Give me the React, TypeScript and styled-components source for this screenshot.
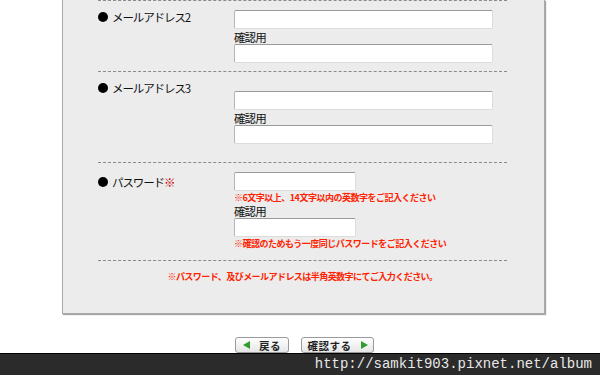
import React from "react";
import styled, { createGlobalStyle } from "styled-components";

const Global = createGlobalStyle`
  html, body { margin: 0; padding: 0; background: #fff; }
  body { font-family: "Noto Sans CJK JP", "Liberation Sans", sans-serif; overflow: hidden; }
`;

const Page = styled.div`
  width: 600px;
  height: 375px;
  display: flex;
  flex-direction: column;
`;

const Main = styled.div`
  width: 483px;
  margin-left: 62px;
  display: flex;
  flex-direction: column;
`;

const Panel = styled.div`
  background: #ececec;
  border: 1px solid #a9a9a9;
  border-top: none;
  box-shadow: 1px 1px 1px rgba(0, 0, 0, 0.35);
  padding: 0 37px 0 35px;
  height: 314px;
  box-sizing: border-box;
  display: flex;
  flex-direction: column;
`;

const Section = styled.div<{ $pt: number; $pb: number }>`
  display: grid;
  grid-template-columns: 136px 1fr;
  border-top: 1px dashed #8a8a8a;
  padding: ${(p) => p.$pt}px 0 ${(p) => p.$pb}px;
`;

const Label = styled.div<{ $pt: number }>`
  display: flex;
  align-items: center;
  gap: 4px;
  height: 14px;
  margin-top: ${(p) => p.$pt}px;
  font-size: 11.5px;
  letter-spacing: -1.1px;
  color: #111;
  line-height: 14px;
`;

const Dot = styled.span`
  width: 10px;
  height: 10px;
  border-radius: 50%;
  background: #000;
  flex: none;
`;

const Req = styled.span`
  color: #cc0000;
  font-weight: bold;
`;

const Fields = styled.div<{ $pt: number }>`
  display: flex;
  flex-direction: column;
  margin-top: ${(p) => p.$pt}px;
`;

const Input = styled.div<{ $w: number }>`
  width: ${(p) => p.$w}px;
  height: 19px;
  box-sizing: border-box;
  background: #fff;
  border: 1px solid #dcdcdc;
  border-top-color: #9a9a9a;
  border-left-color: #b5b5b5;
  border-radius: 2px;
`;

const Sub = styled.div`
  height: 15px;
  line-height: 17px;
  font-size: 11.5px;
  letter-spacing: -0.9px;
  color: #111;
`;

const Note = styled.div<{ $h?: number }>`
  height: ${(p) => p.$h ?? 12}px;
  line-height: 13px;
  font-size: 9px;
  letter-spacing: -0.5px;
  color: #ff2200;
  font-weight: bold;
`;

const Footer = styled.div`
  border-top: 1px dashed #8a8a8a;
  padding-top: 9px;
  text-align: center;
  font-size: 9px;
  letter-spacing: -0.55px;
  color: #ff2200;
  font-weight: bold;
  line-height: 13px;
`;

const Buttons = styled.div`
  display: flex;
  justify-content: center;
  gap: 12px;
  margin-top: 23px;
  padding-left: 2px;
`;

const Btn = styled.div<{ $w: number }>`
  width: ${(p) => p.$w}px;
  height: 16px;
  box-sizing: border-box;
  border: 1px solid #9a9a9a;
  border-radius: 3px;
  background: linear-gradient(#ffffff, #e6e6e6);
  display: flex;
  align-items: center;
  justify-content: center;
  gap: 9px;
  font-size: 10.5px;
  font-weight: bold;
  color: #222;
  letter-spacing: 0.5px;
`;

const Tri = styled.svg`
  width: 7px;
  height: 8px;
  flex: none;
`;

const Bar = styled.div`
  margin-top: auto;
  height: 22px;
  box-sizing: border-box;
  border-top: 1px solid #000;
  background: #2b2b2b;
  color: #e8e8e8;
  font-family: "Liberation Mono", monospace;
  font-size: 14px;
  line-height: 21px;
  text-align: right;
  padding-right: 8px;
`;

const Left = () => (
  <Tri viewBox="0 0 7 8">
    <path d="M0 4 L7 0 L7 8 Z" fill="#2e9e2e" />
  </Tri>
);
const Right = () => (
  <Tri viewBox="0 0 7 8">
    <path d="M7 4 L0 0 L0 8 Z" fill="#2e9e2e" />
  </Tri>
);

export default function App() {
  return (
    <Page>
      <Global />
      <Main>
        <Panel>
          <Section $pt={0} $pb={8}>
            <Label $pt={9}>
              <Dot />
              <span>メールアドレス2</span>
            </Label>
            <Fields $pt={9}>
              <Input $w={259} />
              <Sub>確認用</Sub>
              <Input $w={259} />
            </Fields>
          </Section>
          <Section $pt={0} $pb={18}>
            <Label $pt={9}>
              <Dot />
              <span>メールアドレス3</span>
            </Label>
            <Fields $pt={19}>
              <Input $w={259} />
              <Sub>確認用</Sub>
              <Input $w={259} />
            </Fields>
          </Section>
          <Section $pt={0} $pb={11}>
            <Label $pt={12}>
              <Dot />
              <span>
                パスワード<Req>※</Req>
              </span>
            </Label>
            <Fields $pt={9}>
              <Input $w={122} />
              <Note>※6文字以上、14文字以内の英数字をご記入ください</Note>
              <Sub>確認用</Sub>
              <Input $w={122} />
              <Note>※確認のためもう一度同じパスワードをご記入ください</Note>
            </Fields>
          </Section>
          <Footer>※パスワード、及びメールアドレスは半角英数字にてご入力ください。</Footer>
        </Panel>
        <Buttons>
          <Btn $w={54}>
            <Left />
            戻る
          </Btn>
          <Btn $w={73}>
            確認する
            <Right />
          </Btn>
        </Buttons>
      </Main>
      <Bar>http://samkit903.pixnet.net/album</Bar>
    </Page>
  );
}
